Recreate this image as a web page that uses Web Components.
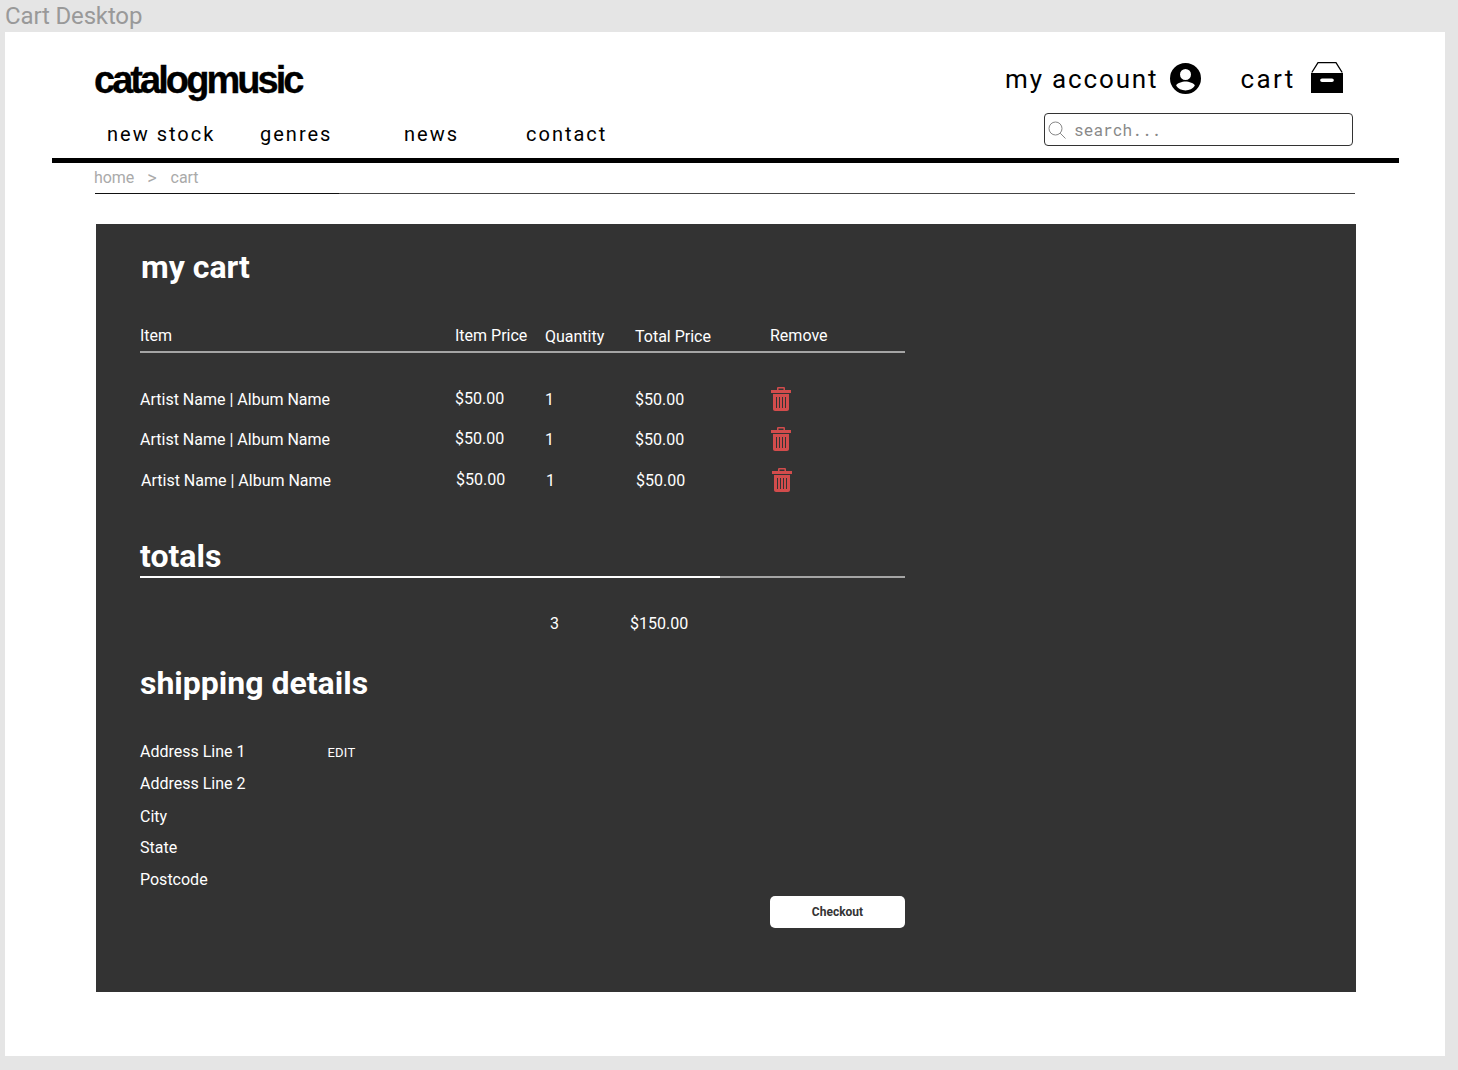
<!DOCTYPE html>
<html>
<head>
<meta charset="utf-8">
<title>Cart Desktop</title>
<style>
  html, body { margin: 0; padding: 0; background: #e5e5e5; }
  body { font-family: Roboto, "Liberation Sans", sans-serif; height: 1070px; overflow: hidden; }
</style>
</head>
<body>
<cart-frame>
  <site-header></site-header>
  <bread-crumb></bread-crumb>
  <cart-panel>
    <cart-table></cart-table>
    <cart-totals></cart-totals>
    <shipping-details></shipping-details>
  </cart-panel>
</cart-frame>

<script>
const TRASH = `<svg width="20" height="24" viewBox="0 0 20 24" fill="#d24c4c" aria-hidden="true">
  <path fill-rule="evenodd" d="M6 3V1.200C6 .6 6.600 0 7.200 0h5.600C13.400 0 14 .6 14 1.200V3h6v3H0V3zM7.500 3h5V1.500h-5z"/>
  <path fill-rule="evenodd" d="M2 7h16v15c0 1.100-.9 2-2 2H4c-1.100 0-2-.9-2-2zM5 10v11h1V10zM8 10v11h1V10zM11 10v11h1V10zM14 10v11h1V10z"/>
</svg>`;

class CartFrame extends HTMLElement {
  constructor() {
    super();
    this.attachShadow({mode: "open"}).innerHTML = `
    <style>
      :host { display: block; }
      h1 { margin: 0; height: 32px; padding-left: 5px; font: 400 24px/33px Roboto, sans-serif; letter-spacing: -.15px; color: #999; }
      .frame { margin-left: 5px; width: 1440px; height: 1024px; background: #fff; overflow: hidden; }
    </style>
    <h1>Cart Desktop</h1>
    <div class="frame"><slot></slot></div>`;
  }
}

class SiteHeader extends HTMLElement {
  constructor() {
    super();
    this.attachShadow({mode: "open"}).innerHTML = `
    <style>
      :host { display: block; margin: 0 46px 0 47px; border-bottom: 5px solid #000; height: 126px; color: #000; }
      .inner { display: flex; justify-content: space-between; height: 100%; }
      .left { padding: 24px 0 0 42px; }
      .logo { font: 700 38px/48px "Liberation Sans", Arial, sans-serif; letter-spacing: -2.95px; height: 48px; -webkit-text-stroke: .3px #000; }
      nav { display: grid; grid-template-columns: 153px 144px 122px auto; margin: 17px 0 0 13px; font: 400 20px/26px Roboto, sans-serif; letter-spacing: 2px; }
      .right { width: 394px; padding-top: 30px; box-sizing: border-box; }
      .links { display: flex; align-items: center; height: 34px; font: 400 26px/34px Roboto, sans-serif; letter-spacing: 1.85px; }
      .links svg { display: block; flex: none; }
      .account { margin-left: 12px; margin-top: -1px; }
      .cart-label { margin-left: 39px; letter-spacing: 2.35px; }
      .box { margin-left: 15px; margin-top: -3px; }
      .search { display: flex; align-items: center; width: 309px; height: 33px; margin: 17px 0 0 39px; box-sizing: border-box; border: 1px solid #333; border-radius: 4px; padding-left: 3px; font: 400 16px/20px "Roboto Mono", "DejaVu Sans Mono", monospace; letter-spacing: .1px; color: #888; }
      .search svg { margin-right: 8px; }
    </style>
    <div class="inner">
      <div class="left">
        <div class="logo">catalogmusic</div>
        <nav><span>new stock</span><span>genres</span><span>news</span><span>contact</span></nav>
      </div>
      <div class="right">
        <div class="links">
          <span>my account</span>
          <svg class="account" width="31" height="31" viewBox="0 0 31 31"><path fill-rule="evenodd" d="M15.500 0a15.500 15.500 0 1 0 0 31 15.500 15.500 0 0 0 0-31zm0 6a5.500 5.500 0 1 1 0 11 5.500 5.500 0 0 1 0-11zm0 21.500c-3.900 0-7.300-1.900-9.300-4.700.1-2.700 6.200-4.300 9.300-4.300s9.200 1.600 9.300 4.300c-2 2.800-5.400 4.700-9.300 4.700z"/></svg>
          <span class="cart-label">cart</span>
          <svg class="box" width="32" height="31" viewBox="0 0 32 31"><path fill-rule="evenodd" d="M0 11h32v20H0zM11 16.500c-1 0-1.800.8-1.800 1.800s.8 1.700 1.800 1.700h10c1 0 1.800-.7 1.800-1.700s-.8-1.800-1.800-1.800z"/><path fill="none" stroke="#000" stroke-width="1.300" d="M.8 10.500 7 .7h18l6.200 9.800"/></svg>
        </div>
        <div class="search">
          <svg width="18" height="18" viewBox="0 0 18 18" fill="none" stroke="#888" stroke-width="1"><circle cx="7.500" cy="7.500" r="6.500"/><path d="M12.200 12.200 17.500 17.500"/></svg>
          <span>search...</span>
        </div>
      </div>
    </div>`;
  }
}

class BreadCrumb extends HTMLElement {
  constructor() {
    super();
    this.attachShadow({mode: "open"}).innerHTML = `
    <style>
      :host { display: block; margin-left: 90px; width: 1260px; height: 31px; box-sizing: border-box; border-bottom: 1px solid #222; border-image: linear-gradient(to right, #111 245px, #444 245px) 1; font: 400 16px/29px Roboto, sans-serif; letter-spacing: -.06px; color: #aaa; }
      div { display: flex; margin-left: -1px; }
      .sep { margin: 0 14px 0 13px; font-size: 18px; }
    </style>
    <div><span>home</span><span class="sep">&gt;</span><span>cart</span></div>`;
  }
}

class CartPanel extends HTMLElement {
  constructor() {
    super();
    this.attachShadow({mode: "open"}).innerHTML = `
    <style>
      :host { display: block; margin: 30px 0 0 91px; width: 1260px; height: 768px; box-sizing: border-box; background: #333; color: #fff; padding: 23px 0 0 44px; font: 400 16px/22px Roboto, sans-serif; }
      h2 { margin: 0 0 0 1px; font: 700 32px/40px Roboto, sans-serif; }
    </style>
    <h2>my cart</h2>
    <slot></slot>`;
  }
}

class CartTable extends HTMLElement {
  constructor() {
    super();
    const row = (extra) => `
      <div class="row item ${extra}">
        <span>Artist Name | Album Name</span><span class="up">$50.00</span><span>1</span><span>$50.00</span>
        <span class="bin">${TRASH}</span>
      </div>`;
    this.attachShadow({mode: "open"}).innerHTML = `
    <style>
      :host { display: block; width: 765px; margin-top: 37px; }
      .row { display: grid; grid-template-columns: 315px 90px 90px 135px 135px; align-items: center; }
      .head { height: 27px; border-bottom: 2px solid #a5a5a5; }
      .head span { position: relative; top: -2px; }
      .head .low { top: -1px; }
      .body { margin-top: 27px; }
      .item { height: 40px; }
      .shift { margin-left: 1px; height: 41px; padding-top: 1px; box-sizing: border-box; }
      .up { position: relative; top: -1px; }
      .bin { display: block; height: 24px; margin: 0 0 2px 1px; }
      svg { display: block; }
    </style>
    <div class="row head"><span>Item</span><span>Item Price</span><span class="low">Quantity</span><span class="low">Total Price</span><span>Remove</span></div>
    <div class="body">${row("")}${row("")}${row("shift")}</div>`;
  }
}

class CartTotals extends HTMLElement {
  constructor() {
    super();
    this.attachShadow({mode: "open"}).innerHTML = `
    <style>
      :host { display: block; width: 765px; margin-top: 35px; }
      h2 { margin: 0; font: 700 32px/40px Roboto, sans-serif; height: 40px; }
      .rule { height: 2px; background: linear-gradient(to right, #fff 580px, #a5a5a5 580px); }
      .sum { display: grid; grid-template-columns: 80px auto; margin: 35px 0 0 410px; height: 22px; }
    </style>
    <h2>totals</h2>
    <div class="rule"></div>
    <div class="sum"><span>3</span><span>$150.00</span></div>`;
  }
}

class ShippingDetails extends HTMLElement {
  constructor() {
    super();
    this.attachShadow({mode: "open"}).innerHTML = `
    <style>
      :host { display: block; width: 765px; margin-top: 28px; }
      h2 { margin: 0; font: 700 32px/40px Roboto, sans-serif; }
      .lines { display: grid; grid-template-rows: 32px 32px 33px 30px 33px; margin-top: 33px; }
      .line { display: flex; align-items: center; }
      .edit { margin-left: 82px; padding-top: 1px; font-size: 13px; font-weight: 400; letter-spacing: .2px; }
      button { display: block; margin-left: 630px; width: 135px; height: 32px; border: 0; border-radius: 5px; background: #fff; color: #333; font: 700 12px/32px Roboto, sans-serif; padding: 0; }
    </style>
    <h2>shipping details</h2>
    <div class="lines">
      <div class="line"><span>Address Line 1</span><span class="edit">EDIT</span></div>
      <div class="line">Address Line 2</div>
      <div class="line">City</div>
      <div class="line">State</div>
      <div class="line">Postcode</div>
    </div>
    <button>Checkout</button>`;
  }
}

customElements.define("cart-frame", CartFrame);
customElements.define("site-header", SiteHeader);
customElements.define("bread-crumb", BreadCrumb);
customElements.define("cart-panel", CartPanel);
customElements.define("cart-table", CartTable);
customElements.define("cart-totals", CartTotals);
customElements.define("shipping-details", ShippingDetails);
</script>
</body>
</html>
